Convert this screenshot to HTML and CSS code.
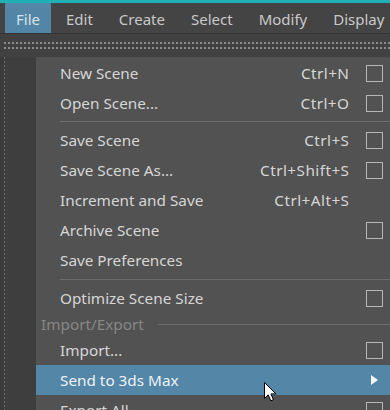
FILE: index.html
```html
<!DOCTYPE html>
<html>
<head>
<meta charset="utf-8">
<link rel="stylesheet" href="styles.css">
</head>
<body>
<div class="topline"></div>
<div class="menubar">
  <span class="mb-item active">File</span>
  <span class="mb-item">Edit</span>
  <span class="mb-item">Create</span>
  <span class="mb-item">Select</span>
  <span class="mb-item">Modify</span>
  <span class="mb-item">Display</span>
</div>
<div class="shelf">
  <div class="dots"></div>
  <div class="dots"></div>
</div>
<div class="workspace">
  <div class="sidebar"></div>
  <div class="menu">
    <div class="mi"><span class="label">New Scene</span><span class="sc">Ctrl+N</span><span class="box"></span></div>
    <div class="mi"><span class="label">Open Scene...</span><span class="sc">Ctrl+O</span><span class="box"></span></div>
    <div class="sep sep-tight"></div>
    <div class="mi"><span class="label">Save Scene</span><span class="sc">Ctrl+S</span><span class="box"></span></div>
    <div class="mi"><span class="label">Save Scene As...</span><span class="sc">Ctrl+Shift+S</span><span class="box"></span></div>
    <div class="mi"><span class="label">Increment and Save</span><span class="sc">Ctrl+Alt+S</span><span></span></div>
    <div class="mi"><span class="label">Archive Scene</span><span class="sc"></span><span class="box"></span></div>
    <div class="mi"><span class="label">Save Preferences</span><span class="sc"></span><span></span></div>
    <div class="sep"></div>
    <div class="mi"><span class="label">Optimize Scene Size</span><span class="sc"></span><span class="box"></span></div>
    <div class="hdr"><span>Import/Export</span><span class="hline"></span></div>
    <div class="mi"><span class="label">Import...</span><span class="sc"></span><span class="box"></span></div>
    <div class="mi hl"><span class="label">Send to 3ds Max</span><span class="sc"></span><span class="arrow"></span></div>
    <div class="mi"><span class="label">Export All...</span><span class="sc"></span><span class="box"></span></div>
  </div>
</div>
<svg class="cursor" width="14" height="20" viewBox="0 0 14 20">
  <path d="M0.5 0.5 L0.5 16.5 L4.2 12.8 L6.8 18.8 L9.4 17.7 L6.9 11.9 L12 11.9 Z" fill="#fff" stroke="#000" stroke-width="1"/>
</svg>
</body>
</html>
```
FILE: styles.css
```css
html, body {
  margin: 0;
  padding: 0;
}
body {
  width: 390px;
  height: 410px;
  overflow: hidden;
  background: #3d3d3d;
  font-family: "Noto Sans", "Open Sans", sans-serif;
  position: relative;
}
.topline {
  height: 3px;
  background: #1fb0b6;
}
.menubar {
  height: 30px;
  background: #444444;
  border-bottom: 1px solid #343434;
  display: flex;
  align-items: stretch;
  padding-left: 5px;
  gap: 4px;
  font-size: 15px;
  color: #c9c9c9;
  white-space: nowrap;
}
.mb-item {
  display: flex;
  align-items: center;
  padding: 1px 11px 0;
}
.mb-item.active {
  background: #5285a6;
  color: #d8e2ea;
}
.shelf {
  height: 23px;
  background: #414141;
  padding-top: 8px;
  box-sizing: border-box;
  border-left: 4px solid #414141;
}
.dots {
  height: 2px;
  margin-bottom: 3px;
  background: repeating-linear-gradient(to right, #8c8c8c 0 2px, transparent 2px 4px);
}
.workspace {
  display: flex;
  height: 400px;
}
.sidebar {
  width: 36px;
  flex: none;
  background: #3e3e3e;
  border-left: 4px solid #3a3a3a;
  box-sizing: border-box;
  background-image: repeating-linear-gradient(to bottom, #6e6e6e 0 2px, transparent 2px 4px);
  background-size: 1px 100%;
  background-repeat: no-repeat;
}
.menu {
  flex: 1;
  background: #525252;
  font-size: 15.3px;
  color: #d6d6d6;
  padding-top: 1px;
}
.mi {
  height: 30px;
  display: grid;
  grid-template-columns: 1fr auto 17px;
  column-gap: 17px;
  align-items: center;
  padding-left: 24px;
  padding-right: 7px;
  white-space: nowrap;
}
.sc {
  letter-spacing: 0.45px;
  margin-right: -0.45px;
}
.mi.hl {
  background: #5386a7;
  color: #eef2f5;
}
.box {
  width: 17px;
  height: 17px;
  box-sizing: border-box;
  border: 1px solid #b6b6b6;
}
.arrow {
  width: 0;
  height: 0;
  margin-left: 5px;
  border-top: 5px solid transparent;
  border-bottom: 5px solid transparent;
  border-left: 7px solid #f4f4f4;
}
.sep {
  height: 8px;
  display: flex;
  align-items: center;
  padding-left: 24px;
}
.sep.sep-tight {
  height: 7px;
}
.sep::before {
  content: "";
  flex: 1;
  height: 1px;
  background: #6c6c6c;
}
.hdr {
  height: 22px;
  display: flex;
  align-items: center;
  padding-left: 5px;
  gap: 14px;
  color: #868686;
}
.hline {
  flex: 1;
  height: 1px;
  background: #6c6c6c;
}
.cursor {
  position: absolute;
  left: 264px;
  top: 382px;
}
```
